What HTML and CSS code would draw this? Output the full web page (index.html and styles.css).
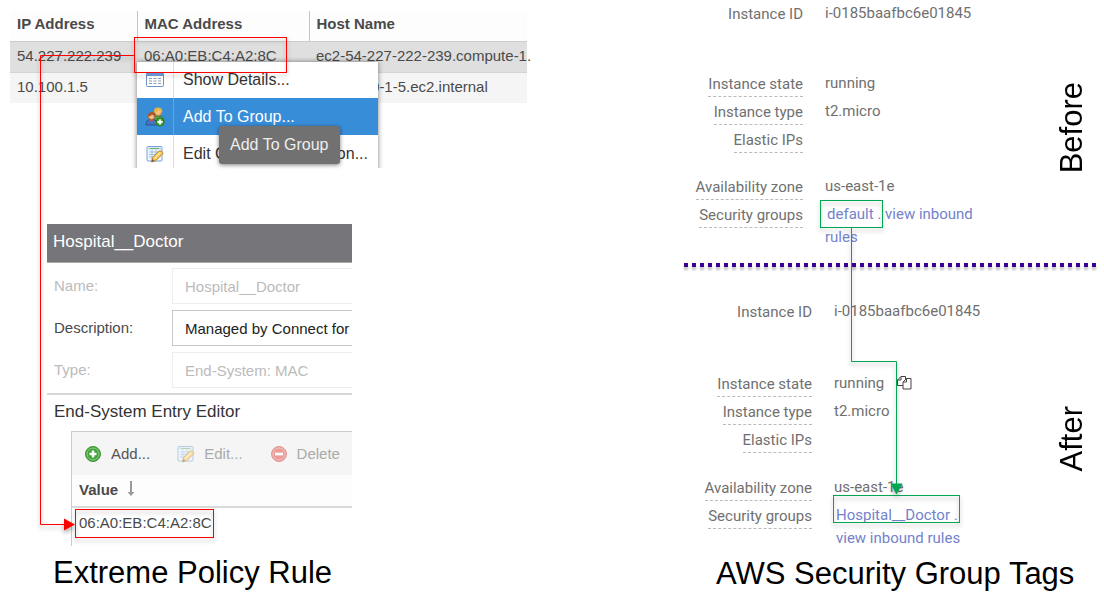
FILE: index.html
```html
<!DOCTYPE html>
<html lang="en">
<head>
<meta charset="utf-8">
<title>Policy rule and security group tags</title>
<link rel="stylesheet" href="styles.css">
</head>
<body>
<svg class="defs" aria-hidden="true">
  <symbol id="i-edit" viewBox="0 0 18 18">
    <rect x="1" y="1.500" width="15" height="14.500" rx="1" fill="#f2f7fd" stroke="#78a3d8"/>
    <path d="M2 2.500h13v2H2z" fill="#c3dcf5"/>
    <path d="M4 3.500h9" stroke="#6fae6c"/>
    <path d="M3 7h11M3 9.500h9M3 12h5M6 5v9M10 5v5" stroke="#9dbde4" fill="none"/>
    <path d="M5.500 17l1-4.500 6.500-6.500q3-1 4 2.500l-7 7z" fill="#f6c44f" stroke="#c08a35"/>
    <path d="M8.500 13.500l6-6" stroke="#ffe79e" stroke-width="1.500"/>
    <path d="M5.500 17l.7-3 2.300 2z" fill="#6b5846"/>
  </symbol>
</svg>
<main class="board">
  <section class="policy">
    <div class="systems">
      <table class="grid">
        <colgroup><col class="c-ip"><col class="c-mac"><col></colgroup>
        <thead><tr><th>IP Address</th><th>MAC Address</th><th>Host Name</th></tr></thead>
        <tbody>
          <tr class="selected"><td>54.227.222.239</td><td>06:A0:EB:C4:A2:8C</td><td>ec2-54-227-222-239.compute-1.</td></tr>
          <tr><td>10.100.1.5</td><td></td><td>ip-10-100-1-5.ec2.internal</td></tr>
        </tbody>
      </table>
      <div class="menu-clip">
        <div class="menu">
          <button type="button"><span class="slot"><svg width="18" height="16" viewBox="0 0 18 16"><rect x=".5" y=".5" width="17" height="14" rx="1" fill="#fff" stroke="#6d93c9"/><path d="M1 1h16v3H1z" fill="#6d9bdc"/><path d="M3 6.500h3M7.500 6.500h3M12 6.500h3M3 9h3M7.500 9h3M12 9h3M3 11.500h3M7.500 11.500h3M12 11.500h3" stroke="#8f9db5"/></svg></span>Show Details...</button>
          <button type="button" class="active"><span class="slot"><svg width="20" height="20" viewBox="0 0 20 20"><path d="M9 14q-1-5 4-5 6 0 6 5v2H9z" fill="#5da43c" stroke="#3d7b2b"/><circle cx="13" cy="5" r="3.500" fill="#f6c27e" stroke="#c58c35"/><path d="M9 5.500Q8.500 .5 13 .5t4.500 5q-3-2-4-2.500-2 2-4.500 2.500z" fill="#e6b640"/><path d="M1 18v-2q1-4 5.500-4t5.500 4v2z" fill="#3f78c0" stroke="#2c5595"/><circle cx="6.500" cy="9.500" r="3.200" fill="#f3bb80" stroke="#a9602e"/><path d="M2.800 9.500q0-4.500 4-4.500t3.700 4Q8 8.500 7 7.500 6 9.500 2.800 9.500z" fill="#a65a2b"/><path d="M5 13l1.500 3L8 13z" fill="#e9443d"/><circle cx="15" cy="15" r="4" fill="#48a63b" stroke="#247a20"/><path d="M15 12.500v5M12.500 15h5" stroke="#fff" stroke-width="1.800"/></svg></span>Add To Group...</button>
          <button type="button"><span class="slot"><svg width="18" height="18"><use href="#i-edit"/></svg></span>Edit Custom Information...</button>
        </div>
      </div>
      <div class="tooltip" role="tooltip">Add To Group</div>
    </div>

    <div class="editor">
      <h2>Hospital__Doctor</h2>
      <div class="form">
        <label class="off" for="f-name">Name:</label><input id="f-name" value="Hospital__Doctor" disabled>
        <label for="f-desc">Description:</label><input id="f-desc" value="Managed by Connect for Control">
        <label class="off" for="f-type">Type:</label><input id="f-type" value="End-System: MAC" disabled>
      </div>
      <h3>End-System Entry Editor</h3>
      <div class="entries">
        <div class="toolbar">
          <button type="button"><svg width="18" height="18" viewBox="0 0 18 18"><circle cx="9" cy="9" r="7.500" fill="#45a33b" stroke="#3b9434"/><circle cx="9" cy="9" r="6" fill="none" stroke="#8fd084"/><path d="M9 5.500v7M5.500 9h7" stroke="#fff" stroke-width="2.500"/></svg>Add...</button>
          <button type="button" disabled><svg width="18" height="18"><use href="#i-edit"/></svg>Edit...</button>
          <button type="button" disabled><svg width="18" height="18" viewBox="0 0 18 18"><circle cx="9" cy="9" r="7.500" fill="#e2443d" stroke="#d33c36"/><circle cx="9" cy="9" r="6" fill="none" stroke="#ef938c"/><path d="M5 9h8" stroke="#fff" stroke-width="2.800"/></svg>Delete</button>
        </div>
        <table class="values">
          <thead><tr><th>Value <svg width="8" height="16" viewBox="0 0 8 16"><path d="M4 0v13" stroke="#999" stroke-width="2"/><path d="M.5 11h7L4 15z" fill="#999"/></svg></th></tr></thead>
          <tbody><tr><td>06:A0:EB:C4:A2:8C</td></tr></tbody>
        </table>
      </div>
    </div>
    <h1>Extreme Policy Rule</h1>
    <svg class="marks" width="300" height="550" viewBox="0 0 300 550" fill="none" stroke="#f00" aria-hidden="true">
      <rect x="134.500" y="37.500" width="152" height="35"/>
      <path d="M134 55.500H40.500V524.500H66"/>
      <rect x="75.500" y="509.500" width="138" height="28"/>
      <path d="M64 518.500v12l11-6z" fill="#f00" stroke="none"/>
    </svg>
  </section>

  <section class="aws">
    <div class="state before">
      <dl>
        <div class="row id"><dt>Instance ID</dt><dd>i-0185baafbc6e01845</dd></div>
        <div class="row"><dt><span>Instance state</span></dt><dd>running</dd></div>
        <div class="row"><dt><span>Instance type</span></dt><dd>t2.micro</dd></div>
        <div class="row ips"><dt><span>Elastic IPs</span></dt><dd></dd></div>
        <div class="row"><dt><span>Availability zone</span></dt><dd>us-east-1e</dd></div>
        <div class="row"><dt><span>Security groups</span></dt><dd class="groups"><a href="#">default</a> . <a href="#">view inbound rules</a></dd></div>
      </dl>
      <h2>Before</h2>
    </div>
    <div class="state after">
      <dl>
        <div class="row id"><dt>Instance ID</dt><dd>i-0185baafbc6e01845</dd></div>
        <div class="row"><dt><span>Instance state</span></dt><dd>running<svg class="copy" width="15" height="15" viewBox="0 0 15 15" fill="#fff" stroke="#444"><path d="M4 1.500h4.500v9H.5V5zM4 1.500V5H.5"/><path d="M9.500 3.500h4.500v10.500H6V7zM9.500 3.500V7H6"/></svg></dd></div>
        <div class="row"><dt><span>Instance type</span></dt><dd>t2.micro</dd></div>
        <div class="row ips"><dt><span>Elastic IPs</span></dt><dd></dd></div>
        <div class="row"><dt><span>Availability zone</span></dt><dd>us-east-1e</dd></div>
        <div class="row"><dt><span>Security groups</span></dt><dd class="groups"><a href="#">Hospital__Doctor</a> . <a href="#">view inbound rules</a></dd></div>
      </dl>
      <h2>After</h2>
    </div>
    <h1>AWS Security Group Tags</h1>
    <svg class="marks" width="300" height="550" viewBox="0 0 300 550" fill="none" stroke="#00a651" aria-hidden="true">
      <rect x="136.500" y="200.500" width="62" height="27"/>
      <path d="M167.500 228V361.500H212.500V486"/>
      <path d="M206.500 483.500h12l-6 11z" fill="#00a651" stroke="none"/>
      <rect x="149.500" y="495.500" width="126" height="27"/>
    </svg>
  </section>
</main>
</body>
</html>
```
FILE: styles.css
```css
* { box-sizing: border-box; }
body {
  margin: 0;
  background: #fff;
  color: #4a4a4a;
  font: 15px/18px "Liberation Sans", Arial, sans-serif;
}
h1, h2, h3, dl, dd { margin: 0; font-weight: normal; }
button, input { font: inherit; color: inherit; border: 0; border-radius: 0; background: none; }
.defs { position: absolute; width: 0; height: 0; }

.board {
  display: grid;
  grid-template-columns: minmax(0, 684fr) minmax(0, 420fr);
  overflow: hidden;
}
.policy, .aws { position: relative; }
.marks {
  position: absolute;
  top: 0;
  left: 0;
  pointer-events: none;
  filter: drop-shadow(0 3px 2px rgba(0, 0, 0, .3));
}
h1 { color: #000; font-size: 31px; line-height: 36px; white-space: nowrap; }

/* End-system table with its context menu */
.systems {
  position: relative;
  height: 157px;
  margin: 11px 157px 0 10px;
}
.grid {
  width: 100%;
  table-layout: fixed;
  border-collapse: collapse;
  white-space: nowrap;
}
.grid th, .grid td { padding: 0 0 0 7px; text-align: left; }
.grid th { height: 30px; padding-bottom: 3px; background: #fdfdfd; border-bottom: 1px solid #ccc; }
.grid th + th { border-left: 1px solid #c4c4c4; }
.grid td { height: 31px; padding-bottom: 2px; background: #f5f5f5; }
.grid .selected td { background: #dfdfdf; border-bottom: 1px solid #d4d4d4; }
.c-ip { width: 127px; }
.c-mac { width: 172px; }

.menu-clip {
  position: absolute;
  top: 46px;
  left: 120px;
  width: 256px;
  height: 111px;
  padding: 5px 8px 0 7px;
  overflow: hidden;
}
.menu { background: #fff; box-shadow: 0 0 5px rgba(0, 0, 0, .5); }
.menu button {
  display: flex;
  align-items: center;
  width: 100%;
  height: 37px;
  padding: 0;
  color: #333;
  font-size: 16px;
  white-space: nowrap;
}
.menu button:first-child { height: 36px; }
.slot {
  display: flex;
  align-items: center;
  justify-content: center;
  align-self: stretch;
  width: 37px;
  margin-right: 9px;
  border-right: 1px solid #ddd;
}
.menu .active { background: #388dd9; color: #fff; }
.active .slot { border-color: #65a6e0; }
.tooltip {
  position: absolute;
  top: 115px;
  left: 209px;
  padding: 10px 12px 10px 11px;
  border-radius: 3px;
  background: #717171;
  color: #eee;
  font-size: 16px;
  white-space: nowrap;
  box-shadow: 0 1px 4px rgba(0, 0, 0, .5);
}

/* Group editor */
.editor { margin: 56px 332px 0 47px; overflow: hidden; }
.editor h2 {
  height: 39px;
  padding: 9px 6px;
  background: #767579;
  border-bottom: 1px solid #aaa;
  color: #fff;
  font-size: 17px;
}
.form {
  display: grid;
  grid-template-columns: 118px minmax(0, 1fr);
  gap: 6px 0;
  align-items: center;
  padding: 5px 0 5px 7px;
  border-bottom: 2px solid #d6d6d6;
}
.form input {
  width: 100%;
  height: 36px;
  padding: 0 0 0 12px;
  border: 1px solid #c8c8c8;
  border-right: 0;
  color: #222;
}
.form .off, .form input:disabled { color: #bbb; }
.form input:disabled { border-color: #eee; }
.editor h3 { padding: 8px 7px 10px; color: #333; font-size: 17px; }
.entries { height: 115px; margin-left: 24px; border: 1px solid #ccc; border-width: 1px 0 0 1px; }
.toolbar {
  display: flex;
  align-items: center;
  gap: 27px;
  height: 43px;
  padding-left: 12px;
  background: #f5f5f5;
  color: #555;
}
.toolbar button { display: flex; align-items: center; gap: 9px; padding: 0; white-space: nowrap; }
.toolbar button:disabled { color: #aaa; }
.toolbar button:disabled svg { opacity: .5; }
.values { width: 100%; border-collapse: collapse; }
.values th {
  height: 32px;
  padding: 0 7px 2px;
  background: #fdfdfd;
  border-bottom: 2px solid #d9d9d9;
  text-align: left;
}
.values svg { margin-left: 5px; vertical-align: -2px; }
.values td { height: 31px; padding: 0 7px; }
.policy h1 { margin: 9px 0 0 53px; }

/* Instance details */
.state {
  display: grid;
  grid-template-columns: minmax(0, 1fr) 34px;
  padding-right: 15px;
  color: #707070;
  font-family: Roboto, "Liberation Sans", sans-serif;
  font-weight: 300;
}
.state h2 {
  justify-self: center;
  align-self: start;
  color: #000;
  font: 31px/34px "Liberation Sans", Arial, sans-serif;
  writing-mode: vertical-rl;
  transform: rotate(180deg);
}
.before { height: 267px; padding-top: 2px; position: relative; }
.before::after {
  content: "";
  position: absolute;
  right: 8px;
  bottom: 0;
  left: 0;
  height: 4px;
  background: repeating-linear-gradient(90deg, #3a0096 0 4px, transparent 4px 8px);
  filter: drop-shadow(0 3px 1px rgba(0, 0, 0, .25));
}
.before h2 { margin-top: 80px; }
.after { height: 289px; padding-top: 33px; }
.after h2 { margin-top: 106px; }
.row {
  display: grid;
  grid-template-columns: 119px minmax(0, 158px);
  column-gap: 22px;
  height: 28px;
  white-space: nowrap;
}
.after .row { grid-template-columns: 128px minmax(0, 150px); }
.row dt { text-align: right; line-height: 24px; }
.row dt span { display: inline-block; border-bottom: 1px dashed #bbb; }
.row dd { line-height: 23px; }
.row.id { margin-bottom: 42px; }
.after .row.id { margin-bottom: 44px; }
.row.ips { margin-bottom: 19px; }
.after .row.ips { margin-bottom: 20px; }
.row .groups { white-space: normal; color: #7482cc; text-indent: 2px; }
.after .row .groups { padding-left: 2px; text-indent: 0; }
.groups a { color: inherit; text-decoration: none; }
.copy { margin-left: 13px; vertical-align: -2px; }
.aws h1 { padding-left: 32px; }
```
